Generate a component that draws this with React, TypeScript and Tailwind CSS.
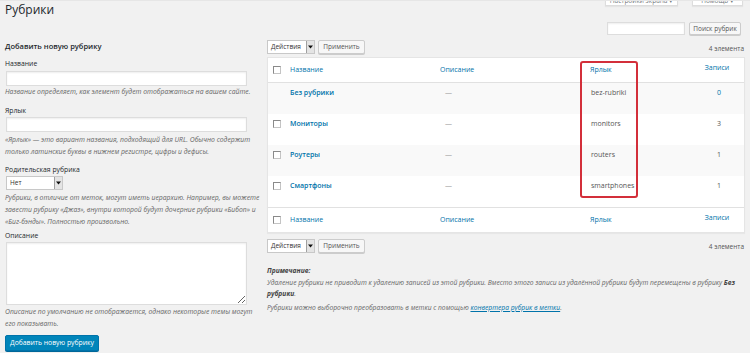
import React from "react";

const help = "text-[6.8px] leading-[11.5px] italic text-[#666] whitespace-nowrap";
const label = "text-[6.8px] leading-[10px] text-[#23282d]";

function Arrow() {
  return (
    <div className="w-[8px] h-full bg-[#e4e4e4] border-l border-[#a0a0a0] flex items-center justify-center">
      <svg width="5" height="4" viewBox="0 0 5 4">
        <path d="M0 0.5 H5 L2.5 3.5 Z" fill="#111" />
      </svg>
    </div>
  );
}

function Select({ text, w }: { text: string; w: string }) {
  return (
    <div className={`${w} h-[14px] bg-white border border-[#c8c8c8] flex items-stretch`}>
      <div className="flex-1 pl-[3px] text-[6.5px] leading-[12px] text-[#333] whitespace-nowrap">{text}</div>
      <Arrow />
    </div>
  );
}

function Btn({ text, w }: { text: string; w: string }) {
  return (
    <div
      className={`${w} h-[14px] bg-[#f7f7f7] border border-[#ccc] rounded-[2px] shadow-[0_1px_0_#ccc] text-[6.5px] leading-[12px] text-[#555] text-center whitespace-nowrap`}
    >
      {text}
    </div>
  );
}

function Check() {
  return (
    <div className="w-[8px] h-[8px] bg-white border border-[#c4c4c4] border-t-[#8a8a8a] border-l-[#8a8a8a]" />
  );
}

const link = "text-[#0073aa]";

function HeadRow({ footer }: { footer?: boolean }) {
  return (
    <div
      className={`grid grid-cols-[22px_150px_150px_1fr_50px] h-[25px] items-center text-[7px] leading-[10px] ${
        footer ? "border-t border-[#e1e1e1]" : "border-b border-[#e1e1e1]"
      }`}
    >
      <div className="pl-[5px]">
        <Check />
      </div>
      <div className={link}>Название</div>
      <div className={link}>Описание</div>
      <div className={link}>Ярлык</div>
      <div className={`${link} text-center pb-[4px] pr-[4px]`}>Записи</div>
    </div>
  );
}

function Row({
  name,
  slug,
  count,
  gray,
  check,
  countLink,
}: {
  name: string;
  slug: string;
  count: string;
  gray?: boolean;
  check?: boolean;
  countLink?: boolean;
}) {
  return (
    <div
      className={`grid grid-cols-[22px_150px_150px_1fr_50px] h-[31px] items-start text-[7px] leading-[10px] ${
        gray ? "bg-[#f9f9f9]" : "bg-white"
      }`}
    >
      <div className="pl-[5px] pt-[6px]">{check ? <Check /> : null}</div>
      <div className={`${link} font-semibold pt-[5px]`}>{name}</div>
      <div className="text-[#999] pt-[5px] pl-[5px]">—</div>
      <div className="text-[#555] pt-[5px] pl-[1px]">{slug}</div>
      <div className={`${countLink ? link : "text-[#555]"} text-center pt-[5px]`}>{count}</div>
    </div>
  );
}

export default function App() {
  return (
    <div className="w-[750px] h-[353px] bg-[#f1f1f1] overflow-hidden font-['Open_Sans',sans-serif] border-t border-[#e6e6e6]">
      {/* header */}
      <div className="flex justify-between px-[5px] -mt-[1px]">
        <h1 className="text-[12px] leading-[16px] pt-[2px] text-[#23282d]">Рубрики</h1>
        <div className="flex flex-col items-end">
          <div className="flex gap-[14px] mr-[2px]">
            <div className="w-[73px] h-[6px] overflow-hidden bg-white border-x border-b border-[#ddd] shadow-[0_1px_1px_rgba(0,0,0,0.05)]">
              <div className="-mt-[4px] text-[6.5px] leading-[9px] text-[#72777c] text-center whitespace-nowrap">
                Настройки экрана ▾
              </div>
            </div>
            <div className="w-[51px] h-[6px] overflow-hidden bg-white border-x border-b border-[#ddd] shadow-[0_1px_1px_rgba(0,0,0,0.05)]">
              <div className="-mt-[4px] text-[6.5px] leading-[9px] text-[#72777c] text-center whitespace-nowrap">
                Помощь ▾
              </div>
            </div>
          </div>
          <div className="flex gap-[4px] mt-[16px] mr-[4px]">
            <div className="w-[78px] h-[13px] bg-white border border-[#ddd] shadow-[inset_0_1px_2px_rgba(0,0,0,0.07)]" />
            <div className="w-[52px] h-[13px] bg-[#f7f7f7] border border-[#ccc] rounded-[2px] shadow-[0_1px_0_#ccc] text-[6.5px] leading-[11px] text-[#555] text-center whitespace-nowrap">
              Поиск рубрик
            </div>
          </div>
        </div>
      </div>

      {/* columns */}
      <div className="flex px-[5px] mt-[4px]">
        {/* left */}
        <div className="w-[243px] flex flex-col">
          <h2 className="mt-[1px] text-[7.5px] leading-[12px] font-semibold text-[#23282d]">
            Добавить новую рубрику
          </h2>
          <div className={`${label} mt-[7px]`}>Название</div>
          <div className="mt-[2px] ml-[1px] w-[241px] h-[15px] bg-white border border-[#ddd] shadow-[inset_0_1px_2px_rgba(0,0,0,0.07)]" />
          <p className={`${help} -mt-[0.5px]`}>
            Название определяет, как элемент будет отображаться на вашем сайте.
          </p>
          <div className={`${label} mt-[9px]`}>Ярлык</div>
          <div className="mt-[1px] ml-[1px] w-[241px] h-[15px] bg-white border border-[#ddd] shadow-[inset_0_1px_2px_rgba(0,0,0,0.07)]" />
          <p className={`${help} mt-[2px]`}>
            «Ярлык» — это вариант названия, подходящий для URL. Обычно содержит
            <br />
            только латинские буквы в нижнем регистре, цифры и дефисы.
          </p>
          <div className={`${label} mt-[8px]`}>Родительская рубрика</div>
          <div className="mt-[1px] ml-[1px]">
            <Select text="Нет" w="w-[57px]" />
          </div>
          <p className={`${help} leading-[12px] mt-[2px]`}>
            Рубрики, в отличие от меток, могут иметь иерархию. Например, вы можете
            <br />
            завести рубрику «Джаз», внутри которой будут дочерние рубрики «Бибоп» и
            <br />
            «Биг-бэнды». Полностью произвольно.
          </p>
          <div className={`${label} mt-[3px]`}>Описание</div>
          <textarea
            readOnly
            className="mt-[1px] ml-[1px] w-[241px] h-[63px] bg-white border border-[#ddd] shadow-[inset_0_1px_2px_rgba(0,0,0,0.07)] outline-none"
          />
          <p className={`${help} leading-[12px] mt-[1px]`}>
            Описание по умолчанию не отображается, однако некоторые темы могут
            <br />
            его показывать.
          </p>
          <div className="mt-[5px] w-[94px] h-[16px] bg-[#0085ba] border border-[#0073aa] rounded-[2px] shadow-[0_1px_0_#006799] text-[6.8px] leading-[14px] text-white text-center whitespace-nowrap">
            Добавить новую рубрику
          </div>
        </div>

        {/* right */}
        <div className="ml-[19px] w-[478px] flex flex-col">
          <div className="mt-[1px] h-[14px] flex items-center justify-between">
            <div className="flex gap-[3px]">
              <Select text="Действия" w="w-[48px]" />
              <Btn text="Применить" w="w-[47px]" />
            </div>
            <div className="text-[6.5px] text-[#555] pr-[1px] pt-[4px]">4 элемента</div>
          </div>

          <div className="relative mt-[3px] bg-white border border-[#e5e5e5] shadow-[0_1px_1px_rgba(0,0,0,0.04)]">
            <HeadRow />
            <Row name="Без рубрики" slug="bez-rubriki" count="0" gray countLink />
            <Row name="Мониторы" slug="monitors" count="3" check />
            <Row name="Роутеры" slug="routers" count="1" gray check />
            <Row name="Смартфоны" slug="smartphones" count="1" check />
            <HeadRow footer />
            <div className="absolute left-[312px] top-[3px] w-[58px] h-[137px] border-2 border-[#d32f3a] rounded-[3px]" />
          </div>

          <div className="mt-[6px] h-[14px] flex items-center justify-between">
            <div className="flex gap-[3px]">
              <Select text="Действия" w="w-[48px]" />
              <Btn text="Применить" w="w-[47px]" />
            </div>
            <div className="text-[6.5px] text-[#555] pr-[1px] pt-[2px]">4 элемента</div>
          </div>

          <div className="mt-[12px] text-[6.7px] leading-[11.5px] italic text-[#666] whitespace-nowrap">
            <p>
              <strong className="text-[#444]">Примечание:</strong>
              <br />
              Удаление рубрики не приводит к удалению записей из этой рубрики. Вместо этого записи из удалённой рубрики будут перемещены в рубрику{" "}
              <strong className="text-[#444]">Без</strong>
              <br />
              <strong className="text-[#444]">рубрики</strong>.
            </p>
            <p className="mt-[2px]">
              Рубрики можно выборочно преобразовать в метки с помощью{" "}
              <span className="text-[#0073aa] underline">конвертера рубрик в метки</span>.
            </p>
          </div>
        </div>
      </div>
    </div>
  );
}
